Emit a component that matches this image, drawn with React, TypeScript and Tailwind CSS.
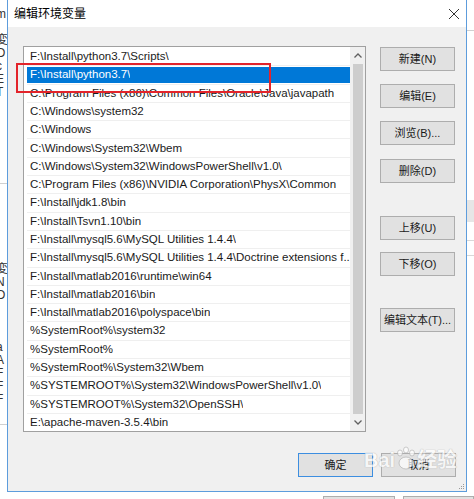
const paths = [
  "F:\\Install\\python3.7\\Scripts\\",
  "F:\\Install\\python3.7\\",
  "C:\\Program Files (x86)\\Common Files\\Oracle\\Java\\javapath",
  "C:\\Windows\\system32",
  "C:\\Windows",
  "C:\\Windows\\System32\\Wbem",
  "C:\\Windows\\System32\\WindowsPowerShell\\v1.0\\",
  "C:\\Program Files (x86)\\NVIDIA Corporation\\PhysX\\Common",
  "F:\\Install\\jdk1.8\\bin",
  "F:\\Install\\Tsvn1.10\\bin",
  "F:\\Install\\mysql5.6\\MySQL Utilities 1.4.4\\",
  "F:\\Install\\mysql5.6\\MySQL Utilities 1.4.4\\Doctrine extensions f...",
  "F:\\Install\\matlab2016\\runtime\\win64",
  "F:\\Install\\matlab2016\\bin",
  "F:\\Install\\matlab2016\\polyspace\\bin",
  "%SystemRoot%\\system32",
  "%SystemRoot%",
  "%SystemRoot%\\System32\\Wbem",
  "%SYSTEMROOT%\\System32\\WindowsPowerShell\\v1.0\\",
  "%SYSTEMROOT%\\System32\\OpenSSH\\",
  "E:\\apache-maven-3.5.4\\bin",
];

const font = {
  fontFamily: '"Liberation Sans", "Noto Sans CJK SC", sans-serif',
};

function Btn({ label, focused }: { label: string; focused?: boolean }) {
  return (
    <div
      className={
        "w-[75px] h-[24px] flex items-center justify-center whitespace-nowrap text-[11px] text-[#1a1a1a] bg-[#e1e1e1] border " +
        (focused ? "border-[#3c8ee0]" : "border-[#adadad]")
      }
    >
      {label}
    </div>
  );
}

export default function App() {
  return (
    <div className="w-[474px] h-[499px] bg-white overflow-hidden flex flex-col" style={font}>
      <div className="flex h-[492px]">
        {/* 背後のウィンドウ（左端） */}
        <div className="w-[7px] relative overflow-hidden bg-white text-[12px] text-[#333] leading-[13px]">
          <div className="absolute left-[-4px] top-[8px] flex flex-col">
            {["m", "", "変", "O", "c", "E", "T"].map((c, i) => (
              <span key={i} className="h-[13px]">{c}</span>
            ))}
          </div>
          <div className="absolute left-0 right-0 top-[183px] h-px bg-[#d0d0d0]" />
          <div className="absolute left-[-4px] top-[250px] flex flex-col">
            {["t", "変", "N", "O", "", "", "", "a", "A", "F", "F", "F"].map((c, i) => (
              <span key={i} className="h-[13px]">{c}</span>
            ))}
          </div>
          <div className="absolute left-0 right-0 top-[424px] h-px bg-[#d0d0d0]" />
        </div>

        {/* ダイアログ */}
        <div className="w-[460px] flex flex-col border-l border-r border-b border-[#5d9cdc]">
          <div className="h-[27px] bg-white flex items-center justify-between pl-[6px] pr-[6px]">
            <span className="text-[12px] text-black">编辑环境变量</span>
            <svg width="12" height="12" viewBox="0 0 12 12">
              <path d="M1 1 L11 11 M11 1 L1 11" stroke="#333" strokeWidth="1" />
            </svg>
          </div>
          <div className="flex-1 bg-[#f0f0f0] relative flex flex-col pl-[15px] pr-[10px] pt-[19px]">
            <div className="flex gap-[14px]">
              {/* 一覧 */}
              <div className="w-[343px] h-[386px] bg-white border border-[#a0a0a0] flex">
                <div className="flex-1 pt-[1px] pl-[3px] overflow-hidden">
                  {paths.map((p, i) => (
                    <div
                      key={i}
                      className="h-[18.3px] flex items-center border-b border-[#efefef]"
                    >
                      <div
                        className={
                          "w-full h-[16px] flex items-center pl-[3px] text-[11.5px] " +
                          (i === 1 ? "bg-[#0078d7] text-white" : "text-[#1a1a1a]")
                        }
                      >
                        <span className="whitespace-nowrap overflow-hidden">{p}</span>
                      </div>
                    </div>
                  ))}
                </div>
                <div className="w-[15px] bg-[#f0f0f0] flex flex-col items-center">
                  <div className="h-[17px] flex items-center justify-center">
                    <svg width="8" height="5" viewBox="0 0 8 5">
                      <path d="M0.5 4.5 L4 1 L7.5 4.5" stroke="#606060" strokeWidth="1.3" fill="none" />
                    </svg>
                  </div>
                  <div className="flex-1 w-[10px] bg-[#cdcdcd]" />
                  <div className="h-[17px] flex items-center justify-center">
                    <svg width="8" height="5" viewBox="0 0 8 5">
                      <path d="M0.5 0.5 L4 4 L7.5 0.5" stroke="#606060" strokeWidth="1.3" fill="none" />
                    </svg>
                  </div>
                </div>
              </div>

              {/* ボタン列 */}
              <div className="flex flex-col pt-[1px]">
                <Btn label="新建(N)" />
                <div className="h-[13px]" />
                <Btn label="编辑(E)" />
                <div className="h-[13px]" />
                <Btn label="浏览(B)..." />
                <div className="h-[14px]" />
                <Btn label="删除(D)" />
                <div className="h-[33px]" />
                <Btn label="上移(U)" />
                <div className="h-[12px]" />
                <Btn label="下移(O)" />
                <div className="h-[32px]" />
                <Btn label="编辑文本(T)..." />
              </div>
            </div>

            <div className="flex justify-end gap-[8px] mt-[21px]">
              <Btn label="确定" focused />
              <Btn label="取消" />
            </div>

            {/* 赤枠 */}
            <div className="absolute left-[8px] top-[36px] w-[255px] h-[30px] border-2 border-[#e3242b]" />

            {/* 透かし */}
            <div className="absolute left-[356px] top-[418px] flex items-end opacity-70">
              <span
                className="text-[20px] font-bold text-white"
                style={{ textShadow: "0 0 1px #aaa, 0 0 1px #aaa" }}
              >
                Bai
              </span>
              <svg width="22" height="26" viewBox="0 0 22 26" className="mb-[3px]">
                <g fill="white" stroke="#aaa" strokeWidth="0.8">
                  <ellipse cx="5" cy="7" rx="2.5" ry="3" />
                  <ellipse cx="11" cy="4" rx="2.5" ry="3" />
                  <ellipse cx="17" cy="7" rx="2.5" ry="3" />
                  <ellipse cx="11" cy="17" rx="7" ry="6" />
                </g>
              </svg>
              <span
                className="text-[20px] font-bold text-white"
                style={{ textShadow: "0 0 1px #aaa, 0 0 1px #aaa" }}
              >
                经验
              </span>
            </div>

            {/* サイズ変更グリップ */}
            <div className="absolute right-[2px] bottom-[2px] grid grid-cols-3 gap-[1px]">
              {[0, 0, 1, 0, 1, 1, 1, 1, 1].map((v, i) => (
                <div key={i} className={"w-[1px] h-[1px] " + (v ? "bg-[#999]" : "")} />
              ))}
            </div>
          </div>
        </div>

        {/* 背後のウィンドウ（右端） */}
        <div className="flex-1 bg-white relative">
          <div className="absolute left-0 right-0 top-[30px] h-px bg-[#d0d0d0]" />
          <div className="absolute left-0 right-0 top-[200px] h-[22px] bg-[#e6e6e6]" />
          <div className="absolute left-0 right-0 top-[240px] h-px bg-[#d8d8d8]" />
          <div className="absolute left-0 right-0 top-[255px] h-px bg-[#d8d8d8]" />
        </div>
      </div>
      <div className="flex-1 bg-white flex pl-[323px] gap-[8px]">
        <div className="w-[74px] border-t border-l border-r border-[#adadad] bg-[#e1e1e1] mt-[4px]" />
        <div className="w-[74px] border-t border-l border-r border-[#adadad] bg-[#e1e1e1] mt-[4px]" />
      </div>
    </div>
  );
}
